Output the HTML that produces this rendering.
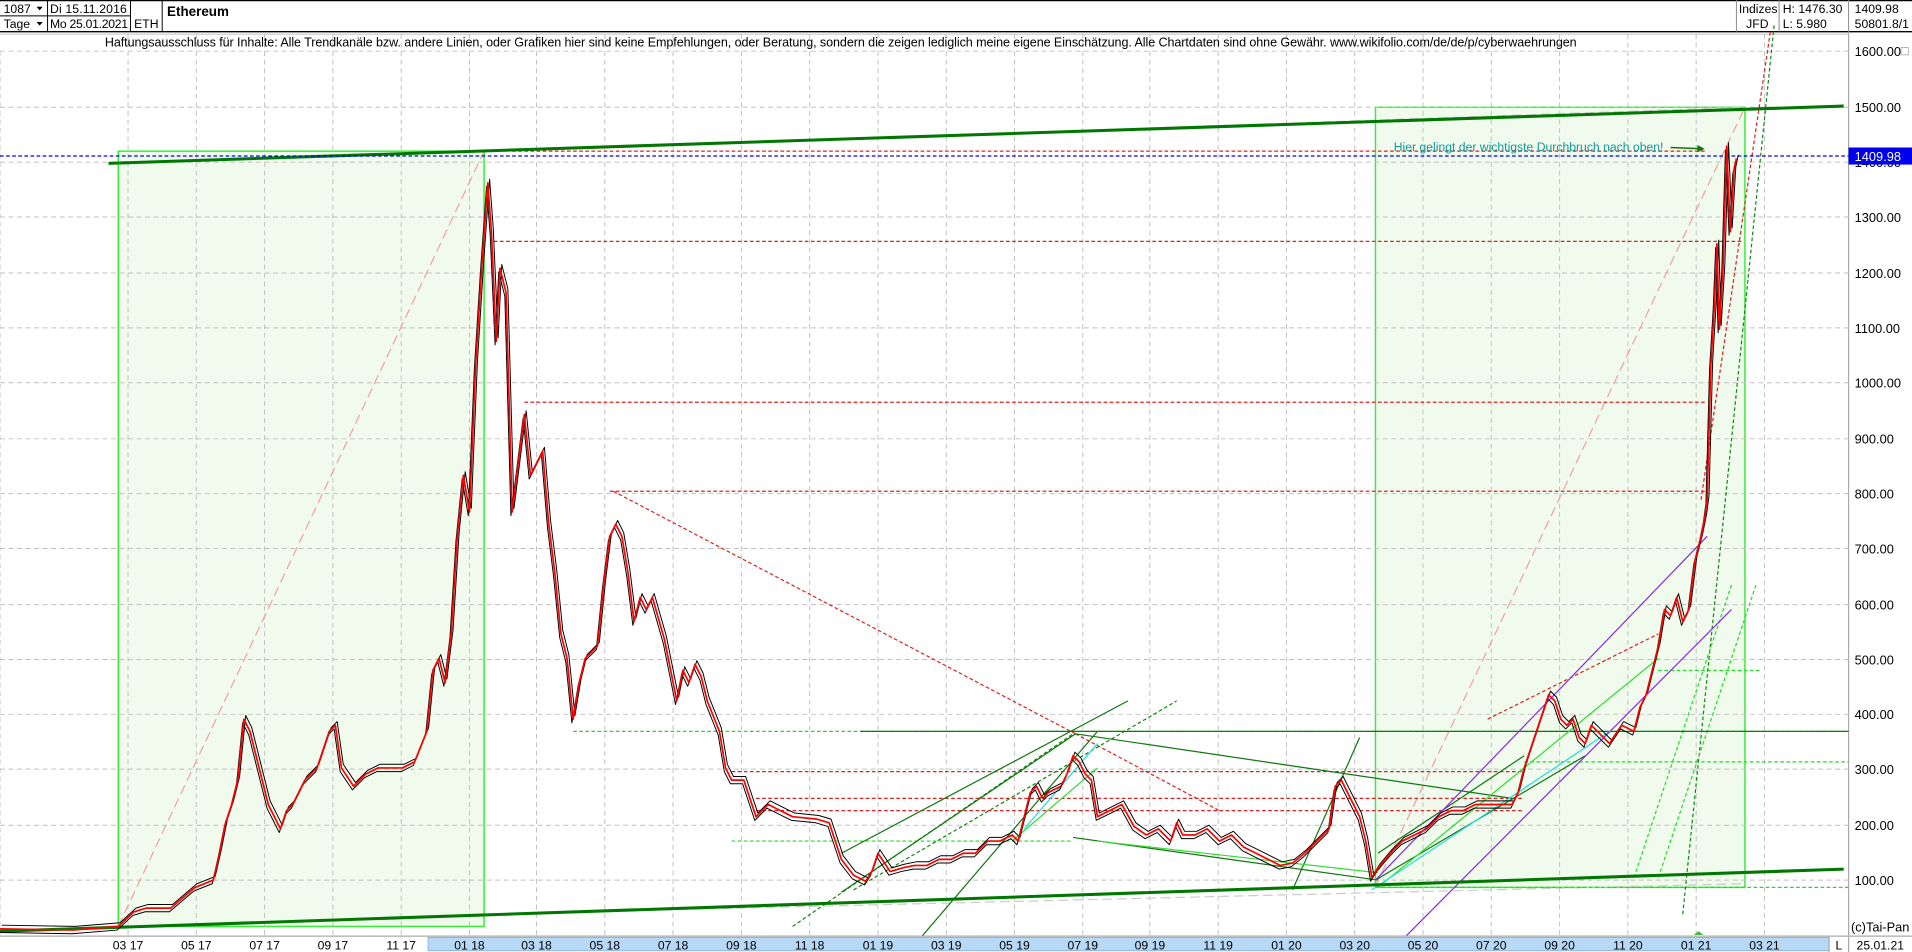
<!DOCTYPE html>
<html><head><meta charset="utf-8"><style>
html,body{margin:0;padding:0;background:#fff;overflow:hidden}
svg{display:block}
text{font-family:"Liberation Sans",sans-serif}
</style></head><body>
<svg width="1912" height="952" viewBox="0 0 1568 781" preserveAspectRatio="none">
<defs>
<polyline id="px" fill="none" stroke-linejoin="round" points="0,762 60,763 97,760 110,748 120,745 140,745 160,728 175,722 180,700 185,675 190,660 195,640 200,590 205,600 210,620 215,640 220,660 225,670 230,680 235,665 240,660 250,640 260,630 270,600 275,595 280,630 290,645 300,635 310,630 320,630 330,630 340,625 350,600 355,550 360,540 365,560 370,520 375,440 380,390 385,420 390,300 395,220 400,150 403,190 407,280 410,220 415,240 420,420 425,380 430,340 435,390 440,380 445,370 450,430 455,470 460,520 465,540 470,590 475,560 480,540 490,530 495,480 500,440 505,430 510,440 515,470 520,510 525,490 530,500 535,490 545,525 550,550 555,575 560,550 565,560 570,545 575,555 580,575 590,600 595,630 600,640 610,640 620,670 625,665 630,660 640,665 650,670 670,672 680,675 685,690 690,705 700,718 710,723 715,715 720,700 730,715 740,712 750,710 760,710 770,705 780,705 790,700 800,700 810,690 820,690 830,685 835,690 840,670 845,650 850,645 855,655 860,650 870,645 875,635 880,620 885,625 890,635 895,640 900,670 910,665 920,660 930,678 940,685 950,680 960,690 965,675 970,685 980,685 990,680 1000,690 1010,685 1020,695 1030,700 1040,705 1050,710 1060,708 1070,700 1080,690 1090,680 1095,645 1100,640 1105,650 1110,660 1115,670 1120,690 1125,720 1130,712 1140,700 1150,690 1160,685 1170,680 1180,670 1190,665 1200,665 1210,660 1220,660 1230,660 1240,660 1245,650 1250,630 1255,615 1260,600 1270,570 1275,575 1280,590 1285,595 1290,590 1295,605 1300,610 1305,595 1310,600 1320,610 1330,595 1340,600 1345,580 1350,570 1355,550 1360,530 1365,500 1370,505 1375,490 1380,510 1385,500 1390,460 1395,440 1398,425 1400,410 1403,300 1406,250 1408,200 1410,270 1413,220 1416,120 1419,190 1422,140 1424,130"/>
</defs>
<!-- header -->
<line x1="0" y1="0.5" x2="1568" y2="0.5" stroke="#000"/>
<line x1="0" y1="26" x2="1568" y2="26" stroke="#000" stroke-width="1.2"/>
<line x1="0" y1="13" x2="107" y2="13" stroke="#000" stroke-width="0.8"/>
<line x1="39" y1="0" x2="39" y2="26" stroke="#000" stroke-width="0.8"/>
<line x1="107" y1="0" x2="107" y2="26" stroke="#000" stroke-width="0.8"/>
<line x1="133" y1="0" x2="133" y2="26" stroke="#000" stroke-width="0.8"/>
<text x="3" y="10.5" font-size="10">1087</text><path d="M30 5.5h5l-2.5 3z" fill="#000"/>
<text x="3" y="23" font-size="10">Tage</text><path d="M30 18h5l-2.5 3z" fill="#000"/>
<text x="41" y="10.5" font-size="10" textLength="63">Di 15.11.2016</text>
<text x="41" y="23" font-size="10" textLength="64">Mo 25.01.2021</text>
<text x="110" y="23" font-size="10">ETH</text>
<text x="137" y="13" font-size="11" font-weight="bold">Ethereum</text>
<line x1="1424" y1="0" x2="1424" y2="26" stroke="#888" stroke-width="0.8"/>
<line x1="1459" y1="0" x2="1459" y2="26" stroke="#888" stroke-width="0.8"/>
<line x1="1516" y1="0" x2="1516" y2="26" stroke="#888" stroke-width="0.8"/>
<text x="1426" y="10.5" font-size="10">Indizes</text>
<text x="1432" y="23" font-size="10">JFD</text>
<text x="1462" y="10.5" font-size="10">H: 1476.30</text>
<text x="1462" y="23" font-size="10">L: 5.980</text>
<text x="1521" y="10.5" font-size="10">1409.98</text>
<text x="1521" y="23" font-size="10">50801.8/1</text>
<!-- chart area -->
<line x1="1516" y1="26" x2="1516" y2="781" stroke="#aaa"/>
<rect x="97" y="124" width="300" height="636" fill="#f0fbee" stroke="#33ee33" stroke-width="1.2"/>
<rect x="1128" y="88" width="303" height="640" fill="#f0fbee" stroke="#33ee33" stroke-width="1.2"/>
<g stroke="#c0c0c0" stroke-width="0.8" stroke-dasharray="4,3">
<line x1="0" y1="42" x2="1516" y2="42"/><line x1="0" y1="88" x2="1516" y2="88"/><line x1="0" y1="133" x2="1516" y2="133"/><line x1="0" y1="178" x2="1516" y2="178"/><line x1="0" y1="224" x2="1516" y2="224"/><line x1="0" y1="269" x2="1516" y2="269"/><line x1="0" y1="314" x2="1516" y2="314"/><line x1="0" y1="360" x2="1516" y2="360"/><line x1="0" y1="405" x2="1516" y2="405"/><line x1="0" y1="450" x2="1516" y2="450"/><line x1="0" y1="496" x2="1516" y2="496"/><line x1="0" y1="541" x2="1516" y2="541"/><line x1="0" y1="586" x2="1516" y2="586"/><line x1="0" y1="631" x2="1516" y2="631"/><line x1="0" y1="677" x2="1516" y2="677"/><line x1="0" y1="722" x2="1516" y2="722"/>
<line x1="0" y1="42" x2="0" y2="768"/>
<line x1="105" y1="28" x2="105" y2="768"/><line x1="161" y1="28" x2="161" y2="768"/><line x1="217" y1="28" x2="217" y2="768"/><line x1="273" y1="28" x2="273" y2="768"/><line x1="329" y1="28" x2="329" y2="768"/><line x1="385" y1="28" x2="385" y2="768"/><line x1="440" y1="28" x2="440" y2="768"/><line x1="496" y1="28" x2="496" y2="768"/><line x1="552" y1="28" x2="552" y2="768"/><line x1="608" y1="28" x2="608" y2="768"/><line x1="664" y1="28" x2="664" y2="768"/><line x1="720" y1="28" x2="720" y2="768"/><line x1="776" y1="28" x2="776" y2="768"/><line x1="832" y1="28" x2="832" y2="768"/><line x1="888" y1="28" x2="888" y2="768"/><line x1="943" y1="28" x2="943" y2="768"/><line x1="999" y1="28" x2="999" y2="768"/><line x1="1055" y1="28" x2="1055" y2="768"/><line x1="1111" y1="28" x2="1111" y2="768"/><line x1="1167" y1="28" x2="1167" y2="768"/><line x1="1223" y1="28" x2="1223" y2="768"/><line x1="1279" y1="28" x2="1279" y2="768"/><line x1="1335" y1="28" x2="1335" y2="768"/><line x1="1391" y1="28" x2="1391" y2="768"/><line x1="1447" y1="28" x2="1447" y2="768"/>
</g>
<line x1="0" y1="28" x2="1516" y2="28" stroke="#c0c0c0" stroke-width="0.8"/>
<text x="86" y="38" font-size="10.3" textLength="1207">Haftungsausschluss für Inhalte: Alle Trendkanäle bzw. andere Linien, oder Grafiken hier sind keine Empfehlungen, oder Beratung, sondern die zeigen lediglich meine eigene Einschätzung. Alle Chartdaten sind ohne Gewähr.  www.wikifolio.com/de/de/p/cyberwaehrungen</text>
<g stroke="#f4a0a0" stroke-width="1" stroke-dasharray="8,4" fill="none">
<line x1="97" y1="760" x2="397" y2="124"/><line x1="1128" y1="727" x2="1431" y2="88"/>
<line x1="400" y1="124" x2="1430" y2="88" stroke="#ccc"/>
<line x1="400" y1="750" x2="1430" y2="725" stroke="#ccc"/>
</g>
<g stroke="#e02020" stroke-width="1" stroke-dasharray="3,2" fill="none">
<line x1="405" y1="198" x2="1430" y2="198"/>
<line x1="430" y1="330" x2="1400" y2="330"/>
<line x1="500" y1="403" x2="1400" y2="403"/>
<line x1="420" y1="124" x2="1400" y2="124"/>
<line x1="600" y1="633" x2="1250" y2="633"/>
<line x1="620" y1="655" x2="1250" y2="655"/>
<line x1="620" y1="665" x2="1250" y2="665"/>
<line x1="503" y1="403" x2="882" y2="602"/>
<line x1="882" y1="602" x2="1000" y2="665"/>
<line x1="1395" y1="410" x2="1452" y2="25"/>
<line x1="1220" y1="590" x2="1360" y2="520"/>
</g>
<g stroke="#22dd22" stroke-width="1" stroke-dasharray="3,2" fill="none">
<line x1="470" y1="600" x2="1516" y2="600"/>
<line x1="1250" y1="625" x2="1516" y2="625"/>
<line x1="1360" y1="550" x2="1445" y2="550"/>
<line x1="1128" y1="728" x2="1516" y2="728"/>
<line x1="600" y1="690" x2="880" y2="690"/>
<line x1="1380" y1="750" x2="1455" y2="20" stroke="#118811"/>
<line x1="1360" y1="720" x2="1440" y2="480"/>
<line x1="1340" y1="720" x2="1420" y2="480"/>
<line x1="650" y1="760" x2="880" y2="602" stroke="#118811"/>
<line x1="700" y1="730" x2="965" y2="575" stroke="#118811"/>
</g>
<g stroke="#117711" stroke-width="1" fill="none">
<line x1="706" y1="600" x2="1516" y2="600"/>
<line x1="882" y1="602" x2="1240" y2="655"/>
<line x1="880" y1="687" x2="1130" y2="722"/>
<line x1="690" y1="732" x2="882" y2="602"/>
<line x1="690" y1="700" x2="925" y2="575"/>
<line x1="745" y1="781" x2="900" y2="600"/>
<line x1="1060" y1="730" x2="1115" y2="605"/>
<line x1="1130" y1="700" x2="1250" y2="620"/>
<line x1="1128" y1="722" x2="1300" y2="620"/>
</g>
<g stroke="#33dd33" stroke-width="1" fill="none">
<line x1="900" y1="690" x2="1130" y2="716"/>
<line x1="830" y1="690" x2="900" y2="630"/>
<line x1="1130" y1="728" x2="1360" y2="540"/>
</g>
<g stroke="#22dddd" stroke-width="1" fill="none">
<line x1="840" y1="680" x2="900" y2="610"/>
<line x1="1125" y1="730" x2="1320" y2="600"/>
</g>
<g stroke="#8a2be2" stroke-width="1" fill="none">
<line x1="1128" y1="722" x2="1400" y2="440"/>
<line x1="1140" y1="781" x2="1420" y2="500"/>
</g>
<line x1="89" y1="134" x2="1512" y2="87" stroke="#007700" stroke-width="2.5"/>
<line x1="0" y1="764" x2="1512" y2="713" stroke="#007700" stroke-width="2.5"/>
<line x1="0" y1="128" x2="1516" y2="128" stroke="#0000ee" stroke-width="1" stroke-dasharray="3,2"/>
<text x="1143" y="124" font-size="10" fill="#119999">Hier gelingt der wichtigste Durchbruch nach oben!</text>
<line x1="1370" y1="121" x2="1395" y2="122" stroke="#117711" stroke-width="1.2"/>
<path d="M1398 122l-6-3v6z" fill="#117711"/>
<!-- price: candle-like -->
<use href="#px" stroke="#000" stroke-width="0.8" transform="translate(1.5,-3)"/>
<use href="#px" stroke="#000" stroke-width="0.8" transform="translate(-1,3)"/>
<use href="#px" stroke="#ff0000" stroke-width="1.4"/>
<g font-size="10.5" fill="#000">
<text x="1521" y="46">1600.00</text><text x="1521" y="92">1500.00</text><text x="1521" y="137">1400.00</text><text x="1521" y="182">1300.00</text><text x="1521" y="228">1200.00</text><text x="1521" y="273">1100.00</text><text x="1521" y="318">1000.00</text><text x="1521" y="364">900.00</text><text x="1521" y="409">800.00</text><text x="1521" y="454">700.00</text><text x="1521" y="500">600.00</text><text x="1521" y="545">500.00</text><text x="1521" y="590">400.00</text><text x="1521" y="635">300.00</text><text x="1521" y="681">200.00</text><text x="1521" y="726">100.00</text>
<text x="1518" y="764">(c)Tai-Pan</text>
</g>
<rect x="1516" y="121" width="52" height="14" fill="#0000ee"/>
<text x="1521" y="132" font-size="10.5" fill="#fff">1409.98</text>
<rect x="1559" y="39" width="6" height="6" fill="#fff" stroke="#aaa" stroke-width="0.7"/>
<rect x="0" y="768" width="1568" height="13" fill="#fff"/>
<line x1="0" y1="768" x2="1568" y2="768" stroke="#aaa"/>
<rect x="351" y="769" width="1149" height="11" fill="#b8d8f8" stroke="#7fa8d8" stroke-width="0.6"/>
<line x1="1516" y1="768" x2="1516" y2="781" stroke="#aaa"/>
<line x1="1500" y1="768" x2="1500" y2="781" stroke="#aaa"/>
<path d="M1389 767l4-3 4 3z" fill="#33bb33"/>
<g font-size="10" fill="#000" text-anchor="middle">
<text x="105" y="779">03 17</text><text x="161" y="779">05 17</text><text x="217" y="779">07 17</text><text x="273" y="779">09 17</text><text x="329" y="779">11 17</text><text x="385" y="779">01 18</text><text x="440" y="779">03 18</text><text x="496" y="779">05 18</text><text x="552" y="779">07 18</text><text x="608" y="779">09 18</text><text x="664" y="779">11 18</text><text x="720" y="779">01 19</text><text x="776" y="779">03 19</text><text x="832" y="779">05 19</text><text x="888" y="779">07 19</text><text x="943" y="779">09 19</text><text x="999" y="779">11 19</text><text x="1055" y="779">01 20</text><text x="1111" y="779">03 20</text><text x="1167" y="779">05 20</text><text x="1223" y="779">07 20</text><text x="1279" y="779">09 20</text><text x="1335" y="779">11 20</text><text x="1391" y="779">01 21</text><text x="1447" y="779">03 21</text>
<text x="1508" y="779">L</text>
<text x="1542" y="779">25.01.21</text>
</g>
</svg>
</body></html>
